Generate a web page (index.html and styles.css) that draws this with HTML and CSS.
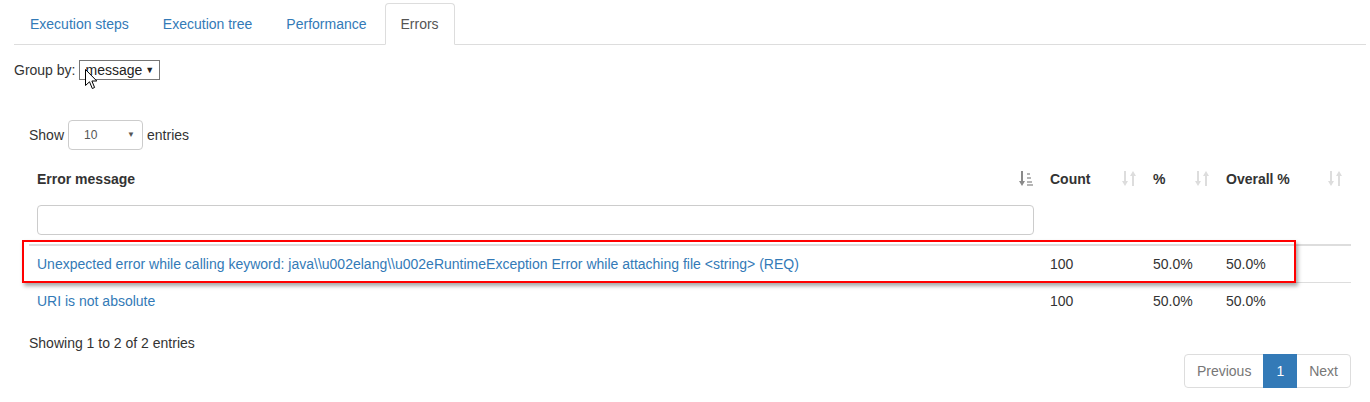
FILE: index.html
```html
<!DOCTYPE html>
<html>
<head>
<meta charset="utf-8">
<title>Errors</title>
<link rel="stylesheet" href="styles.css">
</head>
<body>
<div class="page">
  <ul class="tabs">
    <li><a>Execution steps</a></li>
    <li><a>Execution tree</a></li>
    <li><a>Performance</a></li>
    <li class="active"><a>Errors</a></li>
  </ul>

  <div class="group-by">
    <span>Group by:</span>
    <span class="gb-select">message <span class="gb-caret">&#9660;</span></span>
    <svg class="cursor" width="13" height="21" viewBox="0 0 13 21"><path d="M0.5 0.5 L0.5 16.5 L4.5 12.8 L7.3 19.5 L9.6 18.5 L6.9 12 L11.8 12 Z" fill="#fff" stroke="#000" stroke-width="1" stroke-linejoin="miter"/></svg>
  </div>

  <div class="dt">
    <div class="length">
      <span>Show</span>
      <span class="len-select"><span class="len-val">10</span><span class="len-caret">&#9660;</span></span>
      <span>entries</span>
    </div>

    <div class="table-wrap">
      <table class="grid">
        <colgroup>
          <col class="c-msg"><col class="c-count"><col class="c-pct"><col class="c-overall">
        </colgroup>
        <thead>
          <tr>
            <th>
              <div>Error message</div>
              <input class="filter" type="text">
              <svg class="sort" width="14" height="16" viewBox="0 0 14 16"><rect x="2" y="0" width="2" height="11" fill="#8a8a8a"/><path d="M0 10 L6 10 L3 15 Z" fill="#8a8a8a"/><rect x="8" y="2" width="3" height="2" fill="#b5b5b5"/><rect x="8" y="6" width="4" height="2" fill="#b5b5b5"/><rect x="8" y="10" width="5" height="2" fill="#b5b5b5"/><rect x="8" y="13" width="6" height="2" fill="#b5b5b5"/></svg>
            </th>
            <th>Count
              <svg class="sort" width="14" height="16" viewBox="0 0 14 16"><rect x="2" y="0" width="2" height="11" fill="#ddd"/><path d="M0 10 L6 10 L3 15 Z" fill="#ddd"/><rect x="10" y="4" width="2" height="11" fill="#ddd"/><path d="M8 5 L14 5 L11 0 Z" fill="#ddd"/></svg>
            </th>
            <th>%
              <svg class="sort" width="14" height="16" viewBox="0 0 14 16"><rect x="2" y="0" width="2" height="11" fill="#ddd"/><path d="M0 10 L6 10 L3 15 Z" fill="#ddd"/><rect x="10" y="4" width="2" height="11" fill="#ddd"/><path d="M8 5 L14 5 L11 0 Z" fill="#ddd"/></svg>
            </th>
            <th>Overall %
              <svg class="sort" width="14" height="16" viewBox="0 0 14 16"><rect x="2" y="0" width="2" height="11" fill="#ddd"/><path d="M0 10 L6 10 L3 15 Z" fill="#ddd"/><rect x="10" y="4" width="2" height="11" fill="#ddd"/><path d="M8 5 L14 5 L11 0 Z" fill="#ddd"/></svg>
            </th>
          </tr>
        </thead>
        <tbody>
          <tr>
            <td><a class="link">Unexpected error while calling keyword: java\\u002elang\\u002eRuntimeException Error while attaching file &lt;string&gt; (REQ)</a></td>
            <td>100</td>
            <td>50.0%</td>
            <td>50.0%</td>
          </tr>
          <tr>
            <td><a class="link">URI is not absolute</a></td>
            <td>100</td>
            <td>50.0%</td>
            <td>50.0%</td>
          </tr>
        </tbody>
      </table>
      <div class="highlight"></div>
    </div>

    <div class="info">Showing 1 to 2 of 2 entries</div>

    <div class="pager-row">
      <ul class="pager">
        <li class="disabled first"><a>Previous</a></li>
        <li class="current"><a>1</a></li>
        <li class="disabled last"><a>Next</a></li>
      </ul>
    </div>
  </div>
</div>
</body>
</html>
```

FILE: styles.css
```css
* { box-sizing: border-box; }

html, body {
  margin: 0;
  padding: 0;
  background: #fff;
}

body {
  font-family: "Liberation Sans", Arial, Helvetica, sans-serif;
  font-size: 14px;
  line-height: 20px;
  color: #333;
}

.page {
  padding: 3px 4px 0 14px;
}

/* Tabs */
.tabs {
  list-style: none;
  margin: 0;
  padding: 0;
  display: flex;
  border-bottom: 1px solid #ddd;
}

.tabs li {
  margin-bottom: -1px;
  margin-right: 2px;
}

.tabs li a {
  display: block;
  padding: 10px 15px;
  line-height: 20px;
  border: 1px solid transparent;
  border-radius: 4px 4px 0 0;
  color: #337ab7;
}

.tabs li.active a {
  color: #555;
  background: #fff;
  border-color: #ddd;
  border-bottom-color: transparent;
}

/* Group by */
.group-by {
  position: relative;
  margin-top: 15px;
  display: flex;
  align-items: center;
  gap: 4px;
  height: 20px;
}

.gb-select {
  display: inline-flex;
  align-items: center;
  height: 20px;
  border: 1px solid #767676;
  padding: 0 5px 0 5px;
  color: #222;
  gap: 3px;
}

.gb-caret {
  font-size: 9px;
  line-height: 1;
  color: #222;
}

.cursor {
  position: absolute;
  left: 71px;
  top: 9px;
}

/* DataTable wrapper */
.dt {
  padding: 0 15px;
}

.length {
  margin-top: 40px;
  display: flex;
  align-items: center;
  gap: 4px;
  height: 30px;
}

.len-select {
  display: inline-flex;
  align-items: center;
  justify-content: space-between;
  width: 75px;
  height: 30px;
  padding: 0 7px 0 15px;
  border: 1px solid #ccc;
  border-radius: 4px;
  font-size: 12px;
  color: #555;
}

.len-caret {
  font-size: 8px;
  color: #555;
}

.table-wrap {
  position: relative;
  margin-top: 11px;
}

.grid {
  width: 100%;
  table-layout: fixed;
  border-collapse: collapse;
  border-spacing: 0;
}

.c-msg { width: 1013px; }
.c-count { width: 103px; }
.c-pct { width: 73px; }
.c-overall { width: 133px; }

.grid th {
  position: relative;
  text-align: left;
  vertical-align: top;
  font-weight: bold;
  padding: 8px 8px 9px;
  border-bottom: 2px solid #ddd;
}

.grid td {
  padding: 8px;
  line-height: 20px;
  border-top: 1px solid #ddd;
  vertical-align: top;
}

.grid tbody tr:first-child td {
  border-top: 0;
}

.filter {
  display: block;
  width: 100%;
  height: 30px;
  margin-top: 16px;
  border: 1px solid #ccc;
  border-radius: 4px;
  font: inherit;
  padding: 4px 8px;
}

.sort {
  position: absolute;
  right: 9px;
  top: 10px;
}

.link {
  color: #337ab7;
}

.highlight {
  position: absolute;
  left: -7px;
  top: 79px;
  width: 1274px;
  height: 43px;
  border: 2px solid #f00;
  box-shadow: 2px 3px 4px rgba(0, 0, 0, 0.35);
  pointer-events: none;
}

.info {
  margin-top: 14px;
  line-height: 20px;
}

.pager-row {
  display: flex;
  justify-content: flex-end;
  margin-top: 1px;
}

.pager {
  list-style: none;
  margin: 0;
  padding: 0;
  display: flex;
}

.pager li a {
  display: block;
  padding: 6px 12px;
  line-height: 20px;
  border: 1px solid #ddd;
  margin-left: -1px;
  color: #777;
  background: #fff;
}

.pager li.first a {
  margin-left: 0;
  border-radius: 4px 0 0 4px;
}

.pager li.last a {
  border-radius: 0 4px 4px 0;
}

.pager li.current a {
  background: #337ab7;
  border-color: #337ab7;
  color: #fff;
  position: relative;
}
```
